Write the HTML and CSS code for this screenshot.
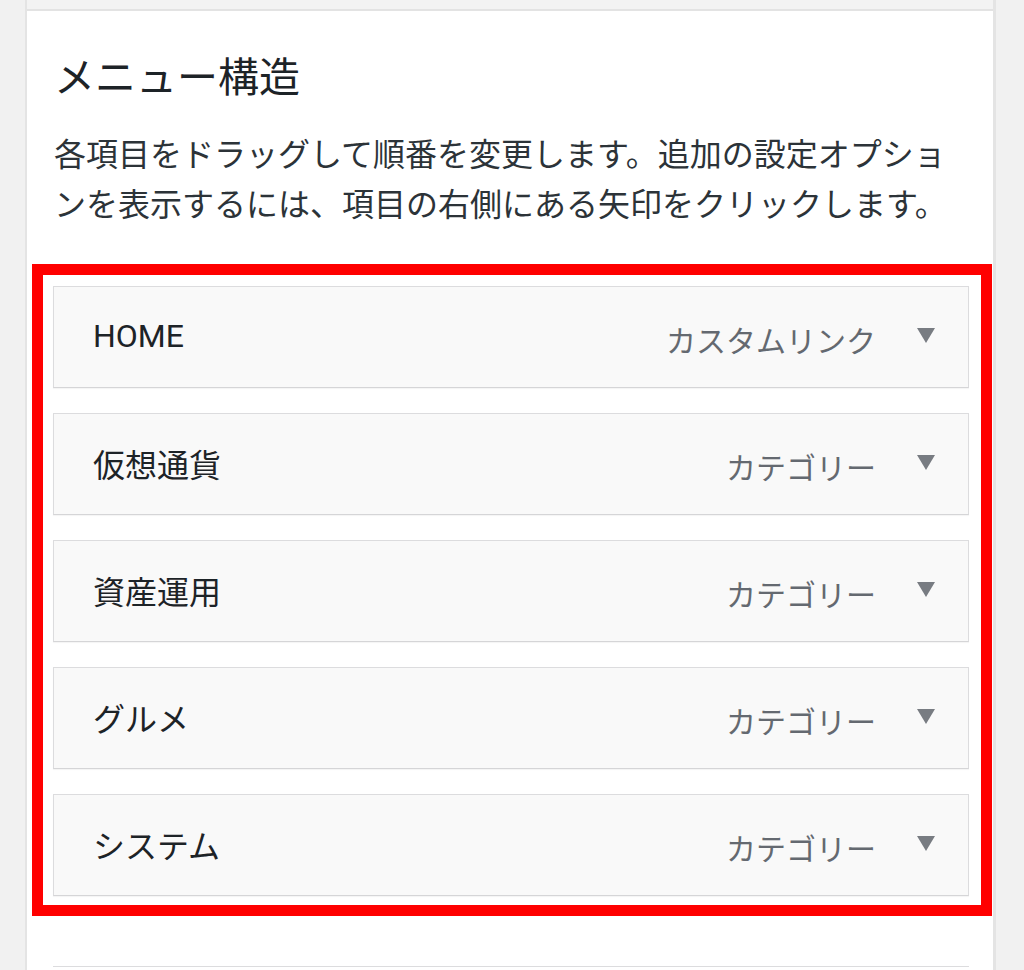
FILE: index.html
```html
<!DOCTYPE html>
<html lang="ja">
<head>
<meta charset="utf-8">
<title>メニュー構造</title>
<link rel="stylesheet" href="styles.css">
</head>
<body>
<div class="panel">
  <div class="prev"></div>
  <div class="content">
    <h2 class="title">メニュー構造</h2>
    <p class="desc">各項目をドラッグして順番を変更します。追加の設定オプションを表示するには、項目の右側にある矢印をクリックします。</p>
    <div class="highlight">
      <ul class="menu">
        <li class="item"><span class="name">HOME</span><span class="type">カスタムリンク</span><svg class="arrow" viewBox="0 0 18 15"><polygon points="0,0 18,0 9,15"/></svg></li>
        <li class="item"><span class="name">仮想通貨</span><span class="type">カテゴリー</span><svg class="arrow" viewBox="0 0 18 15"><polygon points="0,0 18,0 9,15"/></svg></li>
        <li class="item"><span class="name">資産運用</span><span class="type">カテゴリー</span><svg class="arrow" viewBox="0 0 18 15"><polygon points="0,0 18,0 9,15"/></svg></li>
        <li class="item"><span class="name">グルメ</span><span class="type">カテゴリー</span><svg class="arrow" viewBox="0 0 18 15"><polygon points="0,0 18,0 9,15"/></svg></li>
        <li class="item"><span class="name">システム</span><span class="type">カテゴリー</span><svg class="arrow" viewBox="0 0 18 15"><polygon points="0,0 18,0 9,15"/></svg></li>
      </ul>
    </div>
    <div class="next"></div>
  </div>
</div>
</body>
</html>
```
FILE: styles.css
```css
html, body {
  margin: 0;
  padding: 0;
  background: #f1f1f1;
  font-family: Roboto, "Noto Sans CJK JP", sans-serif;
}

.panel {
  margin-left: 25px;
  width: 966px;
  border-left: 2px solid #e4e4e4;
  border-right: 3px solid #e4e4e4;
  background: #fff;
  min-height: 970px;
}

.prev {
  height: 9px;
  background: #f3f3f3;
  border-bottom: 2px solid #e3e3e3;
}

.content {
  padding: 42px 24px 0 26px;
}

.title {
  margin: 0;
  font-weight: 400;
  font-size: 41px;
  line-height: 50px;
  color: #1d2327;
  padding-left: 1px;
}

.desc {
  margin: 27px 0 0 0;
  font-size: 32px;
  line-height: 50px;
  color: #2c3338;
  padding-left: 1px;
}

.highlight {
  margin: 34px -23px 0 -21px;
  border: 11px solid #ff0000;
  padding: 11px 12px 9px 10px;
}

.menu {
  list-style: none;
  margin: 0;
  padding: 0;
  display: flex;
  flex-direction: column;
  gap: 25px;
}

.item {
  height: 100px;
  box-sizing: content-box;
  border: 1px solid #dcdcde;
  border-bottom-color: #d5d5d7;
  background: #f9f9f9;
  display: flex;
  align-items: center;
  padding: 0 33px 0 39px;
  box-shadow: 0 1px 1px rgba(0,0,0,0.04);
}

.name {
  flex: 1;
  font-size: 32px;
  color: #1d2327;
  margin-top: -3px;
}

.type {
  font-size: 30px;
  color: #646970;
  margin-right: 41px;
  margin-top: 3px;
}

.arrow {
  width: 18px;
  height: 15px;
  fill: #787c82;
  margin-top: -4px;
}

.next {
  margin-top: 50px;
  border-top: 1px solid #dcdcde;
  height: 20px;
}
```
